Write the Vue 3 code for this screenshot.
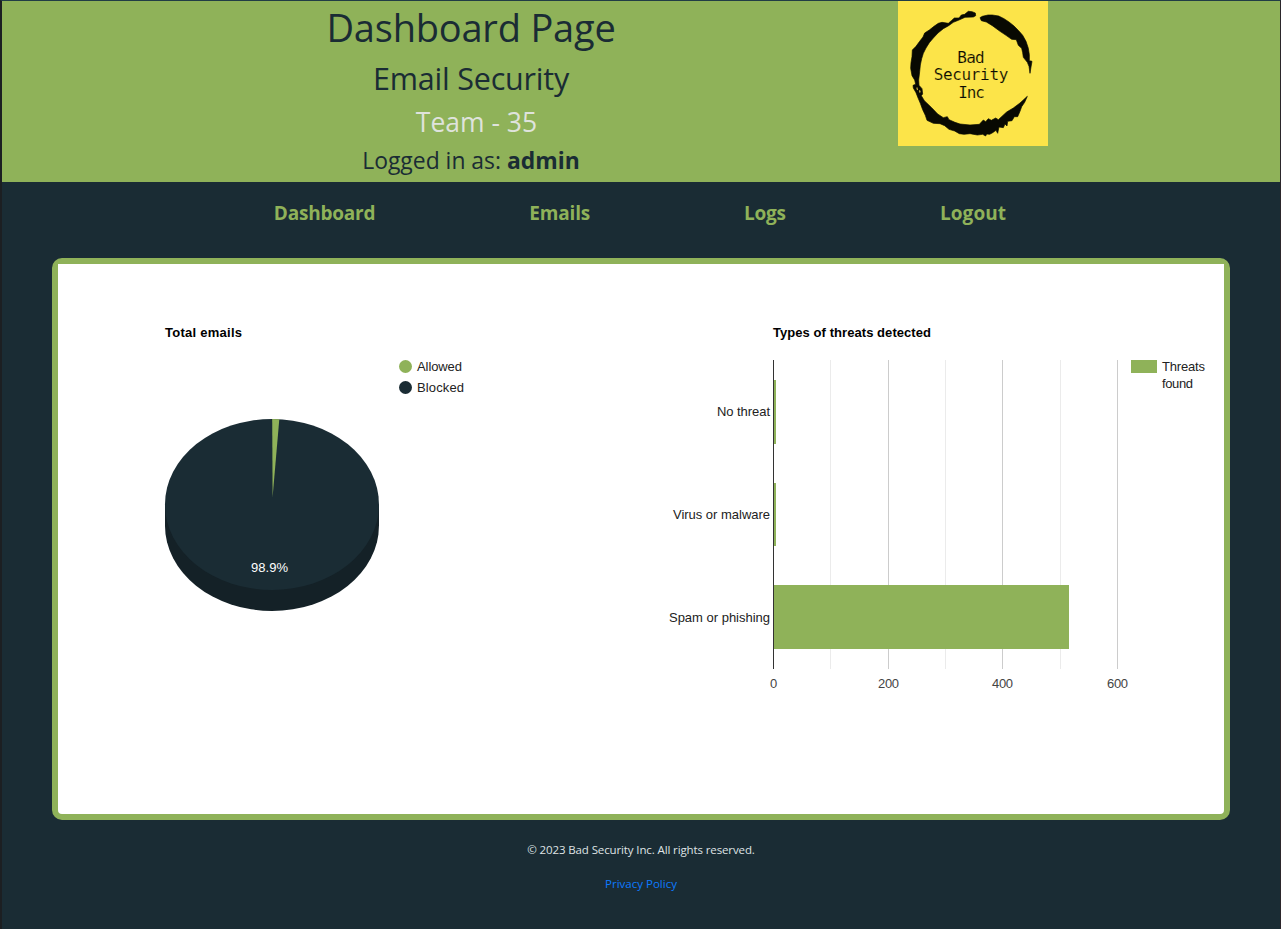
<script setup>
const links = ['Dashboard', 'Emails', 'Logs', 'Logout']

const ticks = [
  { x: 773, label: '0', w: 7 },
  { x: 888, label: '200', w: 21 },
  { x: 1002, label: '400', w: 21 },
  { x: 1117, label: '600', w: 21 },
]
const minorTicks = [830, 945, 1060]

const threats = [
  { label: 'No threat', y: 380, h: 64, w: 3, len: 53 },
  { label: 'Virus or malware', y: 483, h: 63, w: 3, len: 97 },
  { label: 'Spam or phishing', y: 585, h: 64, w: 296, len: 101 },
]
</script>

<template>
  <div class="page">
    <header class="header">
      <div class="titles">
        <h1>Dashboard Page</h1>
        <h2>Email Security</h2>
        <h3>Team - 35</h3>
        <h4>Logged in as: <b>admin</b></h4>
      </div>
      <svg class="logo" viewBox="24 3 450 435" role="img" aria-label="Bad Security Inc">
        <rect x="24" y="3" width="450" height="435" fill="#fce449" />
        <g class="ring">
          <path d="M235 34 L246 35 L256 39 L257 47 L250 51 L225 52 L207 60 L190 67 L176 77 L160 86 L144 99 L130 114 L118 128 L108 144 L100 160 L95 176 L91 195 L89 215 L86 240 L87 256 L96 266 L98 282 L94 287 L103 302 L125 323 L143 342 L160 353 L172 350 L177 359 L195 367 L210 372 L240 375 L268 373 L280 360 L287 365 L295 356 L304 361 L317 354 L325 359 L350 336 L370 324 L390 309 L412 289 L404 307 L395 320 L390 334 L383 350 L373 350 L366 362 L353 364 L351 378 L345 372 L340 383 L327 381 L323 400 L318 391 L308 398 L299 403 L290 402 L287 408 L278 403 L262 405 L240 401 L222 403 L208 401 L194 393 L177 388 L164 377 L150 371 L130 370 L111 361 L106 346 L98 329 L91 310 L83 291 L78 278 L70 264 L69 256 L77 253 L74 240 L66 227 L62 205 L63 188 L66 170 L67 150 L78 139 L89 124 L99 111 L104 99 L118 90 L132 79 L145 70 L156 67 L175 70 L184 62 L193 54 L207 54 L214 45 L224 43 Z" />
          <path d="M270 53 L277 49 L294 45 L307 45 L326 48 L342 56 L357 66 L372 78 L386 92 L398 106 L408 124 L415 145 L418 164 L418 182 L426 184 L423 201 L420 220 L417 199 L412 187 L400 172 L398 158 L395 145 L385 136 L379 119 L365 118 L348 106 L330 94 L307 77 L289 66 L274 62 Z" />
        </g>
        <path d="M79 263 l3 -1 2 7 -3 2z M87 272 l3 -2 2 6 -3 3z" fill="#d9bd43" />
        <g class="logo-text" text-anchor="middle">
          <text x="243" y="188" textLength="82">Bad</text>
          <text x="243" y="240" textLength="224">Security</text>
          <text x="245" y="294" textLength="80">Inc</text>
        </g>
      </svg>
    </header>

    <nav class="nav">
      <a v-for="link in links" :key="link" href="#">{{ link }}</a>
    </nav>

    <main class="card">
      <div class="charts">
        <svg width="583" height="540" viewBox="58 264 583 540">
          <text class="title" x="165" y="337" textLength="77">Total emails</text>
          <circle cx="405.5" cy="366.5" r="6.5" fill="#8fb259" />
          <text class="label" x="417" y="371" textLength="45">Allowed</text>
          <circle cx="405.5" cy="387.5" r="6.5" fill="#1a2c34" />
          <text class="label" x="417" y="392" textLength="47">Blocked</text>
          <path d="M165 504.5 V525.5 A107 85.5 0 0 0 379 525.5 V504.5 Z" fill="#142127" />
          <ellipse cx="272" cy="504.5" rx="107" ry="85.5" fill="#1a2c34" />
          <path d="M272.6 497 L272.2 419 A107 85.5 0 0 1 279.3 419.2 Z" fill="#8fb259" />
          <text class="label white" x="251" y="572" textLength="37">98.9%</text>
        </svg>
        <svg width="583" height="540" viewBox="641 264 583 540">
          <text class="title" x="773" y="337" textLength="158">Types of threats detected</text>
          <rect v-for="x in minorTicks" :key="x" :x="x" y="360" width="1" height="309" fill="#ebebeb" />
          <rect v-for="t in ticks" :key="t.x" :x="t.x" y="360" width="1" height="309" fill="#ccc" />
          <rect
            v-for="b in threats" :key="b.label"
            x="773" :y="b.y" :width="b.w" :height="b.h" fill="#8fb259"
          />
          <rect x="773" y="360" width="1" height="309" fill="#333" />
          <text
            v-for="(b, i) in threats" :key="i"
            class="label" :x="770 - b.len" :y="416 + i * 103" :textLength="b.len"
          >{{ b.label }}</text>
          <text
            v-for="t in ticks" :key="t.label"
            class="label axis" :x="t.x + 0.5 - t.w / 2" y="688" :textLength="t.w"
          >{{ t.label }}</text>
          <rect x="1131" y="360" width="26" height="13" fill="#8fb259" />
          <text class="label" x="1162" y="371" textLength="43">Threats</text>
          <text class="label" x="1162" y="388" textLength="31">found</text>
        </svg>
      </div>
    </main>

    <footer class="footer">
      <p>© 2023 Bad Security Inc. All rights reserved.</p>
      <a href="#">Privacy Policy</a>
    </footer>
  </div>
</template>

<style>
body {
  margin: 0;
  background: #1a2c34;
}
</style>

<style scoped>
.page {
  box-sizing: border-box;
  height: 929px;
  overflow: hidden;
  background: #1a2c34;
  border-top: 1px solid #213d45;
  border-left: 2px solid #1c1f22;
  border-right: 1px solid #2b262b;
  font-family: "Open Sans", "Noto Sans", sans-serif;
}
.header {
  display: flex;
  align-items: flex-start;
  height: 181px;
  background: #8fb259;
  color: #1a2c34;
}
.titles {
  width: 618px;
  margin-left: 160px;
  text-align: center;
}
h1, h2, h3, h4 {
  margin: 0;
  font-weight: 400;
  white-space: nowrap;
}
h1 { font-size: 38px; line-height: 52px; letter-spacing: -0.2px; margin-bottom: 4px; }
h2 { font-size: 30.5px; line-height: 42px; letter-spacing: -0.2px; margin-bottom: 4px; }
h3 { font-size: 26.5px; line-height: 38px; margin-bottom: 4px; padding-left: 11px; color: #dfe3dc; }
h4 { font-size: 22.9px; line-height: 32px; }
.logo {
  width: 150px;
  height: 145px;
  margin-left: 118px;
}
.ring {
  fill: #080902;
  stroke: #080902;
  stroke-width: 2px;
}
.logo-text {
  font-family: "DejaVu Sans Mono", monospace;
  font-size: 48px;
  fill: #0c0b02;
  stroke: #fce449;
  stroke-width: 0.4px;
}
.nav {
  display: flex;
  justify-content: center;
  gap: 154px;
  height: 76px;
}
.nav a {
  font-size: 19px;
  font-weight: 700;
  line-height: 62px;
  letter-spacing: -0.2px;
  color: #8fb259;
  text-decoration: none;
}
.nav a:first-child { margin-left: -2px; }
.nav a:last-child { letter-spacing: 0.1px; }
.card {
  box-sizing: border-box;
  height: 562px;
  margin: 0 50px;
  background: #fff;
  border: 6px solid #8fb259;
  border-radius: 10px;
}
.charts {
  display: flex;
  height: 540px;
  background: #fff;
}
.title, .label {
  font-family: "Liberation Sans", Arial, sans-serif;
  font-size: 13px;
}
.title { font-weight: 700; fill: #000; }
.label { fill: #222; }
.white { fill: #fff; }
.axis { fill: #444; }
.footer {
  display: flex;
  flex-direction: column;
  align-items: center;
  padding-top: 21px;
  font-size: 11.5px;
  line-height: 18px;
  color: #dfe3e4;
}
.footer p { margin: 0 0 16px; letter-spacing: -0.12px; }
.footer a {
  color: #0d7bff;
  text-decoration: none;
}
</style>
